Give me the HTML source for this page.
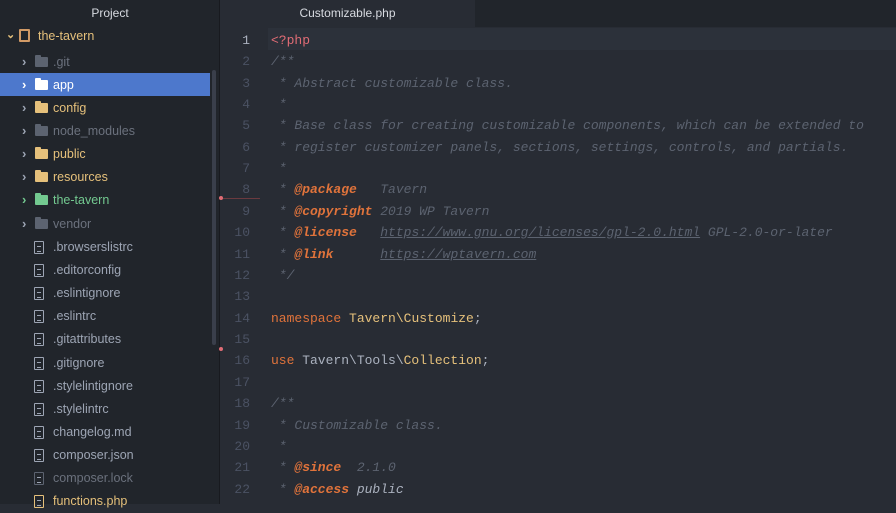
<!DOCTYPE html>
<html><head><meta charset="utf-8"><style>
*{margin:0;padding:0;box-sizing:border-box}
body{width:896px;height:504px;overflow:hidden;background:#282c34;font-family:"Liberation Sans",sans-serif;position:relative}
#side{position:absolute;left:0;top:0;width:220px;height:504px;background:#21252b;border-right:1px solid #181a1f}
#side .hd{position:absolute;top:0;left:0;width:220px;height:27px;color:#d7dae0;font-size:12px;text-align:center;line-height:27px}
.row{position:absolute;left:0;width:210px;height:23px;font-size:12.5px;line-height:23px;white-space:nowrap}
.row.sel{background:#4d78cc;color:#fff}
.chev{position:absolute;left:22px;top:0;font-size:13px;font-weight:bold;color:#9da5b4}
.ic{position:absolute;left:35px;top:7px;width:13px;height:10px;border-radius:1px}
.ic:before{content:"";position:absolute;left:0;top:-2px;width:6px;height:3px;background:inherit;border-radius:1px 1px 0 0}
.fi{position:absolute;left:34px;top:6px;width:10px;height:13px;border:1.5px solid #9da5b4;border-radius:1px}
.fi:after{content:"";position:absolute;left:1.5px;top:4px;width:4px;height:4px;border-top:1px solid #9da5b4;border-bottom:1px solid #9da5b4}
.nm{position:absolute;left:53px;top:1px}
#scroll{position:absolute;left:212px;top:70px;width:4px;height:275px;background:#3a3f4b;border-radius:2px}
#tabs{position:absolute;left:220px;top:0;width:676px;height:27px;background:#21252b}
#tab{position:absolute;left:0;top:0;width:255px;height:27px;background:#282c34;color:#d7dae0;font-size:12px;text-align:center;line-height:27px}
#ed{position:absolute;left:220px;top:30px;width:676px;height:476px}
.ln{position:absolute;left:0;width:30px;text-align:right;color:#4b5263;font-family:"Liberation Mono",monospace;font-size:13px}
.cd{position:absolute;left:51px;white-space:pre;color:#abb2bf;font-family:"Liberation Mono",monospace;font-size:13px}
.c{color:#5c6370;font-style:italic}
.t{color:#e0733b;font-weight:bold;font-style:italic}
.u{text-decoration:underline}
.k{color:#e0733b}
.y{color:#e5c07b}
.r{color:#e06c75}
</style></head><body>
<div id="side">
<div class="hd">Project</div>
<div class="row" style="top:24px;color:#e5c07b"><span style="position:absolute;left:6px;font-size:11px;font-weight:bold">⌄</span><span style="position:absolute;left:19px;top:5px;width:11px;height:13px;border:2px solid #d19a66;border-radius:1px"></span><span style="position:absolute;left:38px;top:1px">the-tavern</span></div>
<div class="row" style="top:50px;color:#6b717d"><span class="chev">›</span><span class="ic" style="background:#5c6370"></span><span class="nm">.git</span></div>
<div class="row sel" style="top:73px"><span class="chev" style="color:#fff">›</span><span class="ic" style="background:#fff"></span><span class="nm">app</span></div>
<div class="row" style="top:96px;color:#e5c07b"><span class="chev">›</span><span class="ic" style="background:#e5c07b"></span><span class="nm">config</span></div>
<div class="row" style="top:119px;color:#6b717d"><span class="chev">›</span><span class="ic" style="background:#5c6370"></span><span class="nm">node_modules</span></div>
<div class="row" style="top:142px;color:#e5c07b"><span class="chev">›</span><span class="ic" style="background:#e5c07b"></span><span class="nm">public</span></div>
<div class="row" style="top:165px;color:#e5c07b"><span class="chev">›</span><span class="ic" style="background:#e5c07b"></span><span class="nm">resources</span></div>
<div class="row" style="top:188px;color:#73c990"><span class="chev" style="color:#73c990">›</span><span class="ic" style="background:#73c990"></span><span class="nm">the-tavern</span></div>
<div class="row" style="top:212px;color:#6b717d"><span class="chev">›</span><span class="ic" style="background:#5c6370"></span><span class="nm">vendor</span></div>
<div class="row" style="top:235px;color:#9da5b4"><span class="fi"></span><span class="nm">.browserslistrc</span></div>
<div class="row" style="top:258px;color:#9da5b4"><span class="fi"></span><span class="nm">.editorconfig</span></div>
<div class="row" style="top:281px;color:#9da5b4"><span class="fi"></span><span class="nm">.eslintignore</span></div>
<div class="row" style="top:304px;color:#9da5b4"><span class="fi"></span><span class="nm">.eslintrc</span></div>
<div class="row" style="top:327px;color:#9da5b4"><span class="fi"></span><span class="nm">.gitattributes</span></div>
<div class="row" style="top:351px;color:#9da5b4"><span class="fi"></span><span class="nm">.gitignore</span></div>
<div class="row" style="top:374px;color:#9da5b4"><span class="fi"></span><span class="nm">.stylelintignore</span></div>
<div class="row" style="top:397px;color:#9da5b4"><span class="fi"></span><span class="nm">.stylelintrc</span></div>
<div class="row" style="top:420px;color:#9da5b4"><span class="fi"></span><span class="nm">changelog.md</span></div>
<div class="row" style="top:443px;color:#9da5b4"><span class="fi"></span><span class="nm">composer.json</span></div>
<div class="row" style="top:466px;color:#6b717d"><span class="fi" style="border-color:#5c6370"></span><span class="nm">composer.lock</span></div>
<div class="row" style="top:489px;color:#e5c07b"><span class="fi" style="border-color:#e5c07b"></span><span class="nm">functions.php</span></div>
<div id="scroll"></div>
</div>
<div id="tabs"><div id="tab">Customizable.php</div></div>
<div style="position:absolute;left:268px;top:28px;width:628px;height:22px;background:#2c313a"></div>
<div style="position:absolute;left:220px;top:198px;width:40px;height:1px;background:#6b3a3f"></div>
<div style="position:absolute;left:219px;top:196px;width:4px;height:4px;background:#e06c75;border-radius:2px"></div>
<div style="position:absolute;left:219px;top:347px;width:4px;height:4px;background:#e06c75;border-radius:2px"></div>
<div id="ed">
<div class="ln" style="top:3px;color:#abb2bf">1</div><div class="cd r" style="top:3px">&lt;?php</div>
<div class="ln" style="top:24px">2</div><div class="cd c" style="top:24px">/**</div>
<div class="ln" style="top:46px">3</div><div class="cd c" style="top:46px"> * Abstract customizable class.</div>
<div class="ln" style="top:67px">4</div><div class="cd c" style="top:67px"> *</div>
<div class="ln" style="top:88px">5</div><div class="cd c" style="top:88px"> * Base class for creating customizable components, which can be extended to</div>
<div class="ln" style="top:110px">6</div><div class="cd c" style="top:110px"> * register customizer panels, sections, settings, controls, and partials.</div>
<div class="ln" style="top:131px">7</div><div class="cd c" style="top:131px"> *</div>
<div class="ln" style="top:152px">8</div><div class="cd c" style="top:152px"> * <span class="t">@package</span>   Tavern</div>
<div class="ln" style="top:174px">9</div><div class="cd c" style="top:174px"> * <span class="t">@copyright</span> 2019 WP Tavern</div>
<div class="ln" style="top:195px">10</div><div class="cd c" style="top:195px"> * <span class="t">@license</span>   <span class="u">https://www.gnu.org/licenses/gpl-2.0.html</span> GPL-2.0-or-later</div>
<div class="ln" style="top:217px">11</div><div class="cd c" style="top:217px"> * <span class="t">@link</span>      <span class="u">https://wptavern.com</span></div>
<div class="ln" style="top:238px">12</div><div class="cd c" style="top:238px"> */</div>
<div class="ln" style="top:259px">13</div>
<div class="ln" style="top:281px">14</div><div class="cd" style="top:281px"><span class="k">namespace</span> <span class="y">Tavern\Customize</span>;</div>
<div class="ln" style="top:302px">15</div>
<div class="ln" style="top:323px">16</div><div class="cd" style="top:323px"><span class="k">use</span> Tavern\Tools\<span class="y">Collection</span>;</div>
<div class="ln" style="top:345px">17</div>
<div class="ln" style="top:366px">18</div><div class="cd c" style="top:366px">/**</div>
<div class="ln" style="top:388px">19</div><div class="cd c" style="top:388px"> * Customizable class.</div>
<div class="ln" style="top:409px">20</div><div class="cd c" style="top:409px"> *</div>
<div class="ln" style="top:430px">21</div><div class="cd c" style="top:430px"> * <span class="t">@since</span>  2.1.0</div>
<div class="ln" style="top:452px">22</div><div class="cd c" style="top:452px"> * <span class="t">@access</span> <span style="color:#abb2bf">public</span></div>
</div>
</body></html>
